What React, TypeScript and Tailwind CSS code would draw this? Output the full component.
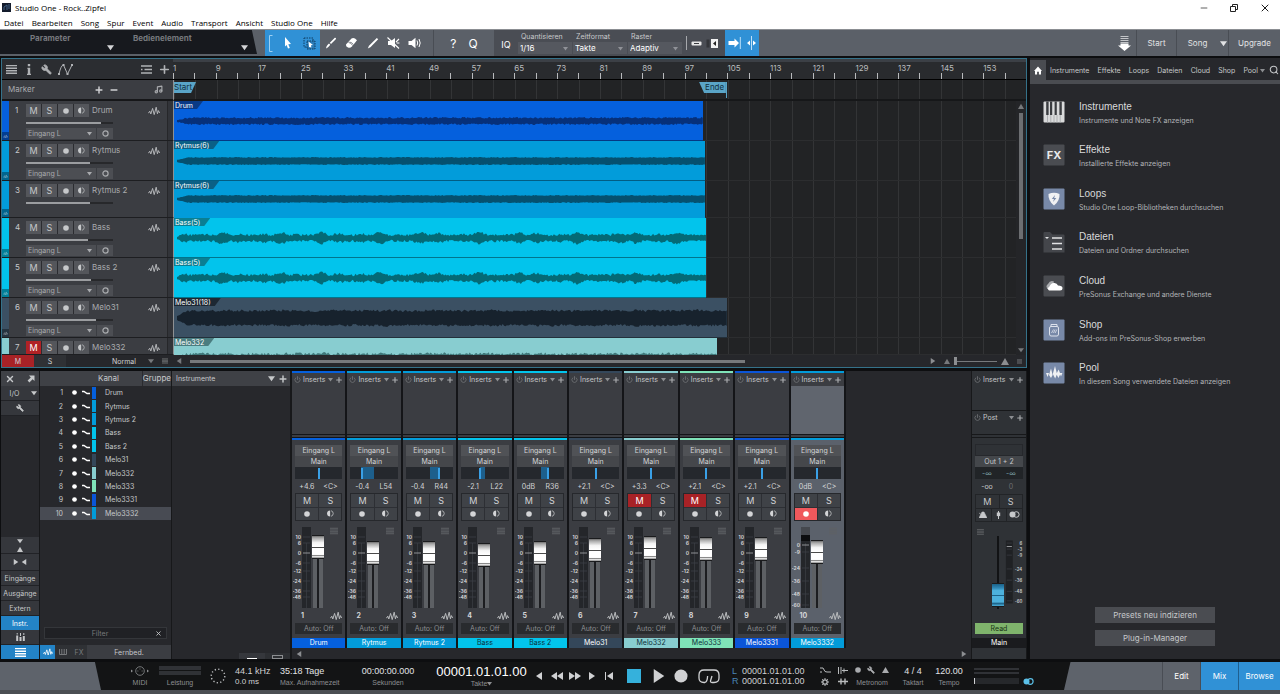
import React from 'react';
import { Minus, Music, Plus, Power, Search, Wrench, X } from 'lucide-react';

interface Track {
  id: number;
  name: string;
  clip: string;
  color: string;
  tag: string;
  wave: string;
  amp: number;
  noise: number;
  swell: number;
  endBar: number;
  volume: number;
  rowClass: string;
  hasInput: boolean;
  muted?: boolean;
}

interface Channel {
  id: number;
  name: string;
  color: string;
  darkText?: boolean;
  gain: string;
  panLabel: string;
  pan: number;
  fader: number;
  muted?: boolean;
  armed?: boolean;
}

const TOTAL_BARS = 160;
const FADER_TRAVEL = 49;

const tracks: Track[] = [
  { id: 1, name: 'Drum', clip: 'Drum', color: '#0560dd', tag: '#0a3a86', wave: '#06307a', amp: 4, noise: 0.4, swell: 0, endBar: 99.3, volume: 86, rowClass: 'h-10', hasInput: true },
  { id: 2, name: 'Rytmus', clip: 'Rytmus(6)', color: '#029cda', tag: '#0b6086', wave: '#05506f', amp: 4, noise: 0.2, swell: 0, endBar: 99.7, volume: 74, rowClass: 'h-10', hasInput: true },
  { id: 3, name: 'Rytmus 2', clip: 'Rytmus(6)', color: '#029cda', tag: '#0b6086', wave: '#05506f', amp: 4, noise: 0.2, swell: 0, endBar: 99.7, volume: 74, rowClass: 'h-[37px]', hasInput: false },
  { id: 4, name: 'Bass', clip: 'Bass(5)', color: '#02c4ec', tag: '#0a7f93', wave: '#046a76', amp: 7, noise: 0.35, swell: 0.4, endBar: 99.9, volume: 71, rowClass: 'h-10', hasInput: true },
  { id: 5, name: 'Bass 2', clip: 'Bass(5)', color: '#02c4ec', tag: '#0a7f93', wave: '#046a76', amp: 7, noise: 0.35, swell: 0.4, endBar: 99.9, volume: 75, rowClass: 'h-10', hasInput: true },
  { id: 6, name: 'Melo31', clip: 'Melo31(18)', color: '#3b5063', tag: '#1d2833', wave: '#17222d', amp: 9, noise: 0.25, swell: 0.08, endBar: 103.8, volume: 81, rowClass: 'h-10', hasInput: true },
  { id: 7, name: 'Melo332', clip: 'Melo332', color: '#88cdd0', tag: '#4a7d80', wave: '#3f7779', amp: 6, noise: 0.45, swell: 0.1, endBar: 101.9, volume: 80, rowClass: 'h-[17px]', hasInput: true, muted: true },
];

const channels: Channel[] = [
  { id: 1, name: 'Drum', color: '#0560dd', gain: '+4.6', panLabel: '<C>', pan: 0, fader: 49 },
  { id: 2, name: 'Rytmus', color: '#029cda', gain: '-0.4', panLabel: 'L54', pan: -54, fader: 43 },
  { id: 3, name: 'Rytmus 2', color: '#029cda', gain: '-0.4', panLabel: 'R44', pan: 44, fader: 43 },
  { id: 4, name: 'Bass', color: '#02c4ec', darkText: true, gain: '-2.1', panLabel: 'L22', pan: -22, fader: 41 },
  { id: 5, name: 'Bass 2', color: '#02c4ec', darkText: true, gain: '0dB', panLabel: 'R36', pan: 36, fader: 43 },
  { id: 6, name: 'Melo31', color: '#34475a', gain: '+2.1', panLabel: '<C>', pan: 0, fader: 46 },
  { id: 7, name: 'Melo332', color: '#88cdd0', darkText: true, gain: '+3.3', panLabel: '<C>', pan: 0, fader: 48, muted: true },
  { id: 8, name: 'Melo333', color: '#7fe3b8', darkText: true, gain: '+2.1', panLabel: '<C>', pan: 0, fader: 47, muted: true },
  { id: 9, name: 'Melo3331', color: '#0b55d8', gain: '+2.1', panLabel: '<C>', pan: 0, fader: 47 },
  { id: 10, name: 'Melo3332', color: '#029cda', gain: '0dB', panLabel: '<C>', pan: 0, fader: 44, armed: true },
];

const menus = ['Datei', 'Bearbeiten', 'Song', 'Spur', 'Event', 'Audio', 'Transport', 'Ansicht', 'Studio One', 'Hilfe'];

const browserItems = [
  { title: 'Instrumente', text: 'Instrumente und Note FX anzeigen' },
  { title: 'Effekte', text: 'Installierte Effekte anzeigen' },
  { title: 'Loops', text: 'Studio One Loop-Bibliotheken durchsuchen' },
  { title: 'Dateien', text: 'Dateien und Ordner durchsuchen' },
  { title: 'Cloud', text: 'PreSonus Exchange und andere Dienste' },
  { title: 'Shop', text: 'Add-ons im PreSonus-Shop erwerben' },
  { title: 'Pool', text: 'In diesem Song verwendete Dateien anzeigen' },
];

/* ---------- small icons ---------- */

type Dir = 'up' | 'down' | 'left' | 'right';

const triPaths: Record<Dir, string> = {
  up: 'M0 8L4 1L8 8Z',
  down: 'M0 1.5L8 1.5L4 7Z',
  left: 'M7 0L7 8L1 4Z',
  right: 'M1 0L1 8L7 4Z',
};

const Tri: React.FC<{ dir?: Dir; size?: number; className?: string }> = ({ dir = 'down', size = 6, className }) => (
  <svg width={size} height={size} viewBox="0 0 8 8" className={className} aria-hidden="true">
    <path d={triPaths[dir]} fill="currentColor" />
  </svg>
);

const WaveIcon: React.FC<{ size?: number; className?: string }> = ({ size = 12, className }) => (
  <svg width={size} height={size} viewBox="0 0 12 12" className={className} aria-hidden="true">
    <path d="M0.4 8.2L1.8 6.2L2.8 9L4.6 3.4L6.2 9.6L8.2 2.2L9.4 8.8L10.4 5.6L11.6 8" fill="none" stroke="currentColor" strokeWidth="1" />
  </svg>
);

const Dot: React.FC<{ size?: number }> = ({ size = 6 }) => (
  <svg width={size} height={size} viewBox="0 0 6 6" aria-hidden="true">
    <circle cx="3" cy="3" r="2.8" fill="currentColor" />
  </svg>
);

const HalfDot: React.FC = () => (
  <svg width="7" height="7" viewBox="0 0 8 8" aria-hidden="true">
    <path d="M3.6 0.5A3.5 3.5 0 0 0 3.6 7.5Z" fill="currentColor" />
    <path d="M4.6 0.8A3.3 3.3 0 0 1 4.6 7.2" fill="none" stroke="currentColor" strokeWidth="0.8" />
  </svg>
);

const Lines: React.FC<{ size?: number; className?: string }> = ({ size = 10, className }) => (
  <svg width={size} height={size} viewBox="0 0 10 10" className={className} aria-hidden="true">
    <path d="M0 1.5H10M0 3.8H10M0 6.1H10M0 8.4H10" stroke="currentColor" strokeWidth="1.3" />
  </svg>
);

/* ---------- title bar, menu, toolbar ---------- */

const TitleBar: React.FC = () => (
  <header className="bg-white font-['Open_Sans','Noto_Sans',sans-serif] text-black">
    <div className="flex h-[15px] items-center gap-1 pl-0.5">
      <svg width="9" height="9" viewBox="0 0 9 9" aria-hidden="true">
        <rect width="9" height="9" fill="#141c2c" />
        <path d="M2 7V4L5 2V7M7 1V6" stroke="#3e5f84" fill="none" />
      </svg>
      <h1 className="text-[8px]">Studio One - Rock..Zipfel</h1>
      <div className="ml-auto flex items-center">
        <button aria-label="Minimieren" className="flex w-[30px] justify-center"><Minus size={10} strokeWidth={1.5} /></button>
        <button aria-label="Wiederherstellen" className="flex w-[30px] justify-center">
          <svg width="8" height="8" viewBox="0 0 8 8"><path d="M0.5 2.5H5.5V7.5H0.5ZM2.5 2.5V0.5H7.5V5.5H5.5" fill="none" stroke="#222" /></svg>
        </button>
        <button aria-label="Schließen" className="flex w-[31px] justify-center"><X size={12} strokeWidth={1.8} /></button>
      </div>
    </div>
    <nav className="flex h-3.5 items-center gap-2 pl-1 text-[8px]">
      {menus.map((m) => <button key={m}>{m}</button>)}
    </nav>
  </header>
);

const ToolSelect: React.FC<{ id: string; label: string; value: string }> = ({ id, label, value }) => (
  <div className="flex w-[54px] flex-col justify-center gap-px">
    <label htmlFor={id} className="px-[3px] text-[7px] text-[#c9cacc]">{label}</label>
    <div className="flex h-3 items-center bg-[#55585f] pr-1">
      <select id={id} className="min-w-0 flex-1 appearance-none pl-0.5 text-[8px] text-white">
        <option>{value}</option>
      </select>
      <Tri size={5} className="text-[#909298]" />
    </div>
  </div>
);

const toolBtn = 'flex w-[21px] items-center justify-center';

const Toolbar: React.FC = () => (
  <div className="flex h-[27px] border-t border-[#8b8e92] bg-[#5b6068] text-[8px] text-[#e2e3e5]">
    <div className="flex h-6 w-[257px] bg-[#17191e] pt-1 text-[8px] font-bold text-[#76787d] [clip-path:polygon(0_0,98%_0,100%_100%,0_100%)]">
      <div className="flex w-[116px] justify-between pl-[30px]">
        <span>Parameter</span>
        <Tri size={7} className="mt-[10px] mr-0.5 text-[#d4d5d7]" />
      </div>
      <div className="flex flex-1 justify-between pl-[17px]">
        <span>Bedienelement</span>
        <Tri size={7} className="mt-[10px] mr-[9px] text-[#d4d5d7]" />
      </div>
    </div>
    <div className="ml-2 flex bg-[#3091d6] text-white">
      <span className="flex w-3 items-center justify-center">
        <svg width="4" height="17" viewBox="0 0 4 17"><path d="M3.5 0.5H0.5V16.5H3.5" fill="none" stroke="#9fd0f2" /></svg>
      </span>
      <button aria-label="Pfeil" className={toolBtn}>
        <svg width="12" height="14" viewBox="0 0 12 14"><path d="M3 1L9 8L6.3 8.2L7.8 12L6 12.6L4.6 9L3 10.5Z" fill="white" /></svg>
      </button>
      <button aria-label="Bereich" className="flex w-[22px] items-center justify-center">
        <svg width="13" height="13" viewBox="0 0 13 13"><rect x="1" y="1" width="9" height="9" fill="none" stroke="#0d3d63" strokeDasharray="1.5 1" /><rect x="4" y="4" width="8" height="8" fill="#2a7ab5" stroke="#0d3d63" strokeDasharray="1.5 1" /><path d="M5.5 4.5L10 8L8 8.3L8.4 10.4L6 10Z" fill="white" /></svg>
      </button>
    </div>
    <div className="flex w-[114px] border-r border-[#494d54] text-white">
      <button aria-label="Messer" className={toolBtn}>
        <svg width="12" height="12" viewBox="0 0 12 12"><path d="M1 11.5C1.5 8.5 3 7.4 4 6.6L5.2 7.8C4.4 9.2 3 10.6 1 11.5ZM4.8 5.8L9.8 0.8Q11.2 0.6 11 2L6 7Z" fill="currentColor" /></svg>
      </button>
      <button aria-label="Radierer" className={toolBtn}>
        <svg width="13" height="12" viewBox="0 0 13 12"><path d="M1 7.5L6.5 1.5Q8 0.5 10 1.5L12 3.2L7 9.5Q5 11.5 3 10.5L1.2 9.2Z" fill="currentColor" /><path d="M3.5 5.5Q6 5.5 7.6 8.6M4.5 5Q7.5 5.5 8.4 7.6" stroke="#5b6068" fill="none" strokeWidth="0.7" /></svg>
      </button>
      <button aria-label="Stift" className={toolBtn}>
        <svg width="12" height="12" viewBox="0 0 12 12"><path d="M0.8 11.4L2 8.8L9.8 1L11.2 2.2L3.4 10.2Z" fill="currentColor" /></svg>
      </button>
      <button aria-label="Stumm" className={toolBtn}>
        <svg width="13" height="12" viewBox="0 0 13 12"><path d="M1 4H4L8 1V11L4 8H1Z" fill="currentColor" /><path d="M0.5 0.5L12 11.5M12 2L9 5M12.4 6H9.6" stroke="currentColor" strokeWidth="1.1" /></svg>
      </button>
      <button aria-label="Hören" className={toolBtn}>
        <svg width="14" height="12" viewBox="0 0 14 12"><path d="M0.5 4H3.5L7.5 0.8V11.2L3.5 8H0.5Z" fill="currentColor" /><path d="M9 3.5Q10.4 6 9 8.5M11 2Q13.4 6 11 10" stroke="currentColor" fill="none" /></svg>
      </button>
    </div>
    <div className="flex w-[60px] items-center justify-center gap-3 text-[12px] text-white">
      <button>?</button>
      <button>Q</button>
    </div>
    <div className="flex bg-[#4a4d54]">
      <button className="w-6 pt-0.5 text-[9px] text-white">IQ</button>
      <div className="flex gap-px">
        <ToolSelect id="quant" label="Quantisieren" value="1/16" />
        <ToolSelect id="time" label="Zeitformat" value="Takte" />
        <ToolSelect id="raster" label="Raster" value="Adaptiv" />
      </div>
      <div className="flex w-[43px] items-center gap-1 pl-1">
        <span className="h-3.5 w-px bg-[#a6a8ac]" />
        <svg width="11" height="5" viewBox="0 0 11 5"><rect x="0.5" y="0.5" width="10" height="4" rx="1" fill="#e6e6e6" /><path d="M3 2.5H8" stroke="#3a3c40" /></svg>
        <svg width="12" height="9" viewBox="0 0 12 9"><rect x="0.5" y="0.5" width="3" height="8" fill="#333539" /><rect x="5" y="0" width="7" height="9" fill="#f2f2f2" /><path d="M10 2L7 4.5L10 7Z" fill="#222" /></svg>
      </div>
    </div>
    <div className="flex items-center gap-1.5 bg-[#3091d6] px-[3px] text-white">
      <svg width="13" height="12" viewBox="0 0 13 12"><path d="M0.5 4H6.5V1.5L11 6L6.5 10.5V8H0.5Z" fill="currentColor" /><path d="M12.3 0V12" stroke="#bfe0f7" /></svg>
      <svg width="9" height="14" viewBox="0 0 9 14"><path d="M4.5 0V14" stroke="#bfe0f7" /><path d="M3 4.5V9.5L0 7ZM6 4.5V9.5L9 7Z" fill="currentColor" /></svg>
    </div>
    <div className="ml-auto flex">
      <button aria-label="Installieren" className="flex w-6 items-center justify-center border-r border-[#494d54]">
        <svg width="13" height="16" viewBox="0 0 13 16"><path d="M2.5 1.5H10.5M2.5 3.5H10.5M2.5 5.5H10.5M2.5 7.5H10.5" stroke="#c3c5c8" /><path d="M2.5 8.5H10.5V10.5H13L6.5 16L0 10.5H2.5Z" fill="white" /></svg>
      </button>
      <button className="w-10 border-r border-[#494d54]">Start</button>
      <button className="w-[41px]">Song</button>
      <button aria-label="Songliste" className="flex w-[11px] items-center justify-center border-r border-[#494d54]"><Tri size={7} /></button>
      <button className="w-[51px]">Upgrade</button>
    </div>
  </div>
);

/* ---------- arranger ---------- */

const rand = (i: number, seed: number) => Math.abs(Math.sin(i * 12.9898 + seed * 78.233) * 43758.5453) % 1;

// Deterministic waveform outline around the centre line, y = 12
const wavePath = (amp: number, noise: number, swell: number, seed: number) => {
  const n = 400;
  const top: string[] = [];
  const bottom: string[] = [];
  for (let i = 0; i <= n; i++) {
    const x = (i * 520) / n;
    const slow = Math.pow(Math.abs(Math.sin(i * 0.21 + seed) * Math.cos(i * 0.083)), 2);
    const body = 1 - noise - swell + swell * slow;
    const fade = Math.min(1, 0.3 + i / 12);
    const up = amp * fade * (body + noise * rand(i, seed));
    const down = amp * fade * (body + noise * rand(i + 900, seed));
    top.push(`${x.toFixed(1)} ${(12 - up).toFixed(1)}`);
    bottom.unshift(`${x.toFixed(1)} ${(12 + down).toFixed(1)}`);
  }
  return `M${top.join('L')}L${bottom.join('L')}Z`;
};

const GridLines: React.FC = () => (
  <div className="absolute inset-0 grid grid-cols-40" aria-hidden="true">
    {Array.from({ length: 40 }, (_, i) => <span key={i} className="border-l border-[#333436]" />)}
  </div>
);

const msrBtn = 'flex w-[15px] items-center justify-center bg-[#54565b]';

const TrackRow: React.FC<{ track: Track }> = ({ track }) => (
  <div className={`flex overflow-hidden ${track.rowClass}`}>
    <div className="flex w-[171px] shrink-0 border-b border-[#1d1e21] bg-[#3b3d42] text-[8px] text-[#a9abae]">
      <div className="flex w-[7px] flex-col justify-end" style={{ backgroundColor: track.color }}>
        {track.id < 7 && <span className="flex h-2 items-center justify-center bg-black/35"><WaveIcon size={5} className="text-white/50" /></span>}
      </div>
      <span className="w-[17px] pt-[5px] pl-1.5 text-[8px] text-[#c6c8ca]">{track.id}</span>
      <div className="flex w-[137px] flex-col pt-[3px]">
        <div className="flex h-[13px] items-center">
          <div className="flex h-[13px] gap-px bg-[#2b2c30] text-[9px] text-[#c6c8ca]">
            <button className={`flex w-[15px] items-center justify-center ${track.muted ? 'bg-[#b02225] text-white' : 'bg-[#54565b]'}`}>M</button>
            <button className={msrBtn}>S</button>
            <button aria-label="Aufnahme" className={msrBtn}><Dot /></button>
            <button aria-label="Monitor" className={msrBtn}><HalfDot /></button>
          </div>
          <span className="flex-1 pl-[3px]">{track.name}</span>
          <WaveIcon size={12} className="mr-[3px] text-[#b3b5b8]" />
        </div>
        <input
          type="range"
          aria-label={`Lautstärke ${track.name}`}
          defaultValue={track.volume}
          className="mt-[5px] h-0.5 w-[87px] shrink-0 appearance-none [&::-webkit-slider-thumb]:h-0.5 [&::-webkit-slider-thumb]:w-px [&::-webkit-slider-thumb]:appearance-none"
          style={{ background: `linear-gradient(to right, #9b9da0 ${track.volume}%, #27282b ${track.volume}%)` }}
        />
        {track.hasInput && (
          <div className="mt-1 flex h-[11px] shrink-0 gap-px">
            <div className="flex w-[70px] items-center bg-[#4c4e53] pr-1">
              <select aria-label={`Eingang ${track.name}`} className="min-w-0 flex-1 appearance-none pl-0.5 text-[7px] text-[#a9abae]">
                <option>Eingang L</option>
              </select>
              <Tri size={5} />
            </div>
            <button aria-label="Stereo" className="flex w-4 items-center justify-center bg-[#4c4e53]">
              <svg width="7" height="7" viewBox="0 0 7 7"><circle cx="3.5" cy="3.5" r="2.6" fill="none" stroke="currentColor" strokeWidth="1.2" /></svg>
            </button>
          </div>
        )}
      </div>
      <span className="ml-auto w-1.5 border-l border-[#26272a] bg-[#323439]" />
    </div>
    <div className="relative flex-1 border-b border-l border-b-[#2c2d2f] border-l-[#8e9092] bg-[#222325]">
      <GridLines />
      <div
        className="relative flex h-10 flex-col border-b border-black/40"
        style={{ width: `${(track.endBar / TOTAL_BARS) * 100}%`, backgroundColor: track.color }}
      >
        <span
          className="flex h-2 items-center self-start pr-2.5 pl-px text-[7px] text-white [clip-path:polygon(0_0,100%_0,calc(100%-6px)_100%,0_100%)]"
          style={{ backgroundColor: track.tag }}
        >
          {track.clip}
        </span>
        <svg viewBox="0 0 520 24" preserveAspectRatio="none" className={`ml-[3px] h-6 ${track.hasInput ? '' : '-mt-0.5'}`} aria-hidden="true">
          <path d={wavePath(track.amp, track.noise, track.swell, track.clip.length)} fill={track.wave} />
        </svg>
      </div>
    </div>
  </div>
);

const Ruler: React.FC = () => (
  <div className="grid flex-1 grid-cols-20 border-t-[3px] border-b border-t-[#3c4046] border-b-black bg-[#292b2e]">
    {Array.from({ length: 20 }, (_, i) => (
      <div key={i} className="flex flex-col justify-between">
        <span className="pt-0.5 text-[8px] leading-[9px] text-[#b9bbbd]">{i * 8 + 1}</span>
        <span className="grid h-1.5 grid-cols-2">
          <i className="border-l border-[#b9bbbd]" />
          <i className="border-l border-[#b9bbbd]" />
        </span>
      </div>
    ))}
  </div>
);

const Arranger: React.FC = () => (
  <section className="flex flex-col border border-[#35728a] bg-[#26272b]">
    <div className="flex h-[21px]">
      <div className="flex w-[171px] shrink-0 items-center gap-2.5 border-b border-black bg-[#2b2d31] pl-1 text-[#b0b2b5]">
        <Lines size={11} />
        <svg width="4" height="11" viewBox="0 0 4 11"><path d="M0.8 0H3.2V2.2H0.8ZM0.4 3.8H3.2V9.8H4V11H0V9.8H0.8V5H0.4Z" fill="currentColor" /></svg>
        <Wrench size={11} className="-scale-x-100" fill="currentColor" />
        <svg width="16" height="13" viewBox="0 0 16 13" className="-ml-1"><path d="M1 11Q3 2 5.5 2L9.5 11L14 2" stroke="currentColor" fill="none" /><path d="M0 10H2V12H0ZM4.5 1H6.5V3H4.5ZM8.5 10H10.5V12H8.5ZM13 1H15V3H13Z" fill="currentColor" /></svg>
        <svg width="11" height="9" viewBox="0 0 11 9" className="ml-auto"><path d="M0 1H11M3.5 4.5H11M0 4.5H1.5M0 8H11" stroke="currentColor" strokeWidth="1.5" /></svg>
        <Plus size={13} strokeWidth={3} className="-ml-1 mr-0.5" />
      </div>
      <Ruler />
    </div>
    <div className="flex h-[21px]">
      <div className="flex w-[171px] shrink-0 items-center border-b-2 border-[#161719] bg-[#3b3d42] pl-1.5 text-[8px] text-[#a9abae]">
        <span className="w-[86px]">Marker</span>
        <Plus size={10} strokeWidth={3.5} className="text-[#d0d1d3]" />
        <Minus size={10} strokeWidth={3.5} className="ml-[5px] text-[#d0d1d3]" />
        <Music size={9} strokeWidth={3} className="mr-2.5 ml-auto" />
      </div>
      <div className="relative flex-1 border-b-2 border-l border-b-[#161719] border-l-[#8e9092] bg-[#222325]">
        <GridLines />
        <span className="absolute top-0.5 left-0 h-[11px] bg-[#5aa5c8] pr-1 text-[8px] leading-[11px] text-[#123142] [clip-path:polygon(0_0,100%_0,calc(100%-5px)_100%,0_100%)]">Start</span>
        <span
          className="absolute top-0.5 h-[11px] -translate-x-full bg-[#5aa5c8] pr-0.5 pl-1.5 text-[8px] leading-[11px] text-[#123142] [clip-path:polygon(0_0,100%_0,100%_100%,5px_100%)]"
          style={{ left: `${(103.7 / TOTAL_BARS) * 100}%` }}
        >
          Ende
        </span>
        <i className="absolute top-0.5 h-4 w-px bg-[#5aa5c8]" style={{ left: `${(103.7 / TOTAL_BARS) * 100}%` }} />
      </div>
    </div>
    <div className="relative">
      {tracks.map((t) => <TrackRow key={t.id} track={t} />)}
      <div className="absolute inset-y-0 right-0 flex w-2.5 flex-col items-center bg-[#242528] py-0.5 text-[#77797c]">
        <Tri dir="up" size={6} />
        <span className="mt-1 h-[126px] w-1 bg-[#6c6e71]" />
        <Tri size={6} className="mt-auto" />
      </div>
    </div>
    <div className="flex h-3 items-center text-[7px] text-[#d0d1d3]">
      <button className="h-full w-8 bg-[#a82226]">M</button>
      <button className="h-full w-8 bg-[#2f3135]">S</button>
      <select aria-label="Spurhöhe" className="ml-[46px] w-9 appearance-none">
        <option>Normal</option>
      </select>
      <Tri size={6} className="text-[#77797c]" />
      <Lines size={6} className="ml-2 text-[#77797c]" />
      <Tri dir="left" size={6} className="ml-2 text-[#77797c]" />
      <div className="ml-2 flex flex-1 text-[#77797c]">
        <span className="h-[3px] w-3/4 bg-[#77797c]" />
      </div>
      <Tri dir="right" size={6} className="text-[#8c8e91]" />
      <Tri dir="up" size={6} className="ml-2 text-[#77797c]" />
      <input
        type="range"
        aria-label="Zoom"
        defaultValue={0}
        className="mx-1 h-2 w-[43px] appearance-none bg-[linear-gradient(#77797c,#77797c)] bg-[length:100%_1px] bg-center bg-no-repeat [&::-webkit-slider-thumb]:h-2 [&::-webkit-slider-thumb]:w-[3px] [&::-webkit-slider-thumb]:appearance-none [&::-webkit-slider-thumb]:bg-[#8c8e91]"
      />
      <Tri dir="up" size={8} className="text-[#8c8e91]" />
      <Lines size={5} className="mr-1 ml-2 text-[#77797c]" />
    </div>
  </section>
);

/* ---------- mixer ---------- */

const sideBtn = 'flex items-center justify-center border-b border-[#212226] bg-[#35373c]';

const MixerSide: React.FC = () => (
  <div className="flex w-[38px] flex-col text-[7px] text-[#c6c8ca]">
    <div className="flex h-[15px] items-center justify-between bg-[#3f4146] px-1">
      <X size={10} strokeWidth={3.5} />
      <svg width="8" height="8" viewBox="0 0 8 8"><path d="M2 0.5H7.5V6L5.6 4.2L2.4 7.4L0.6 5.6L3.8 2.4Z" fill="currentColor" /></svg>
    </div>
    <div className="flex h-[15px]">
      <button className={`${sideBtn} flex-1`}>I/O</button>
      <button aria-label="I/O Liste" className={`${sideBtn} w-[11px]`}><Tri size={6} /></button>
    </div>
    <button aria-label="Optionen" className={`${sideBtn} h-[15px]`}><Wrench size={8} fill="currentColor" className="-scale-x-100" /></button>
    <button aria-label="Höhe" className={`${sideBtn} mt-auto h-[17px] flex-col gap-0.5`}><Tri size={6} /><Tri dir="up" size={6} /></button>
    <button aria-label="Breite" className={`${sideBtn} h-[17px] gap-0.5`}><Tri dir="right" size={6} /><Tri dir="left" size={6} /></button>
    <button className={`${sideBtn} h-[15px]`}>Eingänge</button>
    <button className={`${sideBtn} h-[15px]`}>Ausgänge</button>
    <button className={`${sideBtn} h-[15px]`}>Extern</button>
    <button className="h-[14px] bg-[#2383c6] text-white">Instr.</button>
    <button aria-label="Kanäle" className={`${sideBtn} h-[15px]`}>
      <svg width="9" height="8" viewBox="0 0 9 8"><path d="M1.2 0V1.5M4.5 0V3M7.8 0V2" stroke="currentColor" /><path d="M1.2 2.5V8M4.5 4V8M7.8 3V8" stroke="currentColor" strokeWidth="2" /></svg>
    </button>
    <button aria-label="Liste" className="flex h-[14px] items-center justify-center bg-[#2383c6] text-white"><Lines size={11} /></button>
  </div>
);

const ChannelList: React.FC = () => (
  <div className="flex w-[133px] flex-col border-x border-[#17181a] text-[7px] text-[#c6c8ca]">
    <table className="w-full border-collapse">
      <thead>
        <tr className="h-[15px] bg-[#3f4146] text-[8px]">
          <th className="w-[26px]" />
          <th className="w-[24px]" />
          <th className="w-1" />
          <th className="pl-1 text-left font-normal">Kanal</th>
          <th className="w-7 border-l border-[#2a2b2f] text-right font-normal">Gruppe</th>
        </tr>
      </thead>
    </table>
    <table className="h-[134px] w-full border-collapse">
      <tbody>
        {channels.map((c) => (
          <tr key={c.id} className={c.armed ? 'bg-[#484b53]' : ''}>
            <td className="w-[23px] p-0 text-right">{c.id}</td>
            <td className="w-[29px] p-0">
              <span className="flex items-center justify-end gap-[5px] pr-0.5 text-white">
                <Dot size={5} />
                <svg width="8" height="5" viewBox="0 0 8 5"><path d="M0 1.5H2L5 3.5H8" stroke="currentColor" strokeWidth="1.4" fill="none" /></svg>
              </span>
            </td>
            <td className="w-1 p-0"><span className="block h-3 w-1" style={{ backgroundColor: c.color }} /></td>
            <td className="p-0 pl-[9px]">{c.name}</td>
          </tr>
        ))}
      </tbody>
    </table>
    <div className="mx-1 mt-auto mb-1.5 flex h-3 items-center border border-[#34363a] bg-[#202125] pr-1">
      <input aria-label="Filter" placeholder="Filter" className="min-w-0 flex-1 text-center placeholder:text-[#77797c]" />
      <X size={7} strokeWidth={3} />
    </div>
    <div className="flex h-[14px] items-stretch bg-[#2f3135]">
      <button aria-label="Audio" className="flex w-[15px] items-center justify-center bg-[#2383c6] text-white"><WaveIcon size={10} /></button>
      <button aria-label="Instrument" className="flex w-4 items-center justify-center text-[#77797c]">
        <svg width="8" height="6" viewBox="0 0 8 6"><path d="M0.5 0V5.5H7.5V0M2.8 0V5M5.2 0V5" stroke="currentColor" fill="none" /></svg>
      </button>
      <button className="w-4 text-[#77797c]">FX</button>
      <button className="flex-1 bg-[#3b3d42]">Fernbed.</button>
    </div>
  </div>
);

const InsertHeader: React.FC<{ label: string }> = ({ label }) => (
  <div className="flex h-[13px] items-center gap-0.5 px-0.5 text-[7px] text-[#c6c8ca]">
    <Power size={7} strokeWidth={2.5} className="text-[#77797c]" />
    <span className="flex-1">{label}</span>
    <Tri size={5} className="text-[#8c8e91]" />
    <Plus size={8} strokeWidth={3.5} className="text-[#a9abae]" />
  </div>
);

const normalScale: [string, number][] = [['10', 10], ['6', 16], ['0', 26], ['-6', 36], ['-12', 44], ['-24', 54], ['-36', 64], ['-48', 70]];
const armedScale: [string, number][] = [['0', 18], ['-9', 25], ['-24', 41], ['-36', 54], ['-48', 67], ['-60', 78]];

const MeterScale: React.FC<{ armed?: boolean }> = ({ armed }) => (
  <svg width="18" height="81" viewBox="0 0 18 81" aria-hidden="true">
    <rect x="9" y="0" width="9" height="81" fill="#24262a" />
    {armed && <rect x="9" y="0" width="9" height="8" fill="#45484e" />}
    {armed && <rect x="9" y="8" width="9" height="6" fill="#0c0d0f" />}
    <path d="M13.5 16V81" stroke="#34373c" />
    {(armed ? armedScale : normalScale).map(([text, y]) => (
      <g key={text}>
        <text x="8" y={y + 2} textAnchor="end" fontSize="5" fontWeight="600" fill="#dadbdd">{text}</text>
        <path d={`M10 ${y}H17`} stroke={text === '0' ? '#a9abae' : '#3d4046'} strokeWidth="0.8" />
      </g>
    ))}
  </svg>
);

const faderBase =
  'appearance-none [writing-mode:vertical-lr] [direction:rtl] h-[73px] w-3 bg-no-repeat bg-bottom [&::-webkit-slider-thumb]:h-6 [&::-webkit-slider-thumb]:w-3 [&::-webkit-slider-thumb]:appearance-none [&::-webkit-slider-thumb]:border-x [&::-webkit-slider-thumb]:border-[#1a1b1d]';
const faderWhite =
  'bg-[length:100%_52px] bg-[linear-gradient(90deg,transparent_1px,#5d6064_1px,#5d6064_5px,#1c1d20_5px,#1c1d20_7px,#5d6064_7px,#5d6064_11px,transparent_11px)] [&::-webkit-slider-thumb]:bg-[linear-gradient(#6e6e6e,#a6a6a6_8%,#f4f4f4_30%,#ffffff_48%,#4a4a4a_50%,#4a4a4a_53%,#ffffff_54%,#ffffff_84%,#777777_88%,#f0f0f0_92%,#8a8a8a)]';
const faderBlue =
  'bg-[linear-gradient(90deg,transparent_5px,#121315_5px,#121315_7px,transparent_7px)] [&::-webkit-slider-thumb]:bg-[linear-gradient(#1c6288,#2f87b5_18%,#4db1dc_30%,#4db1dc_48%,#1c6288_50%,#1c6288_54%,#4db1dc_56%,#4db1dc_82%,#1c6288_88%,#4db1dc)]';

const ChannelStrip: React.FC<{ channel: Channel }> = ({ channel: c }) => {
  const edge = 50 + c.pan / 2;
  const from = Math.min(edge, 50);
  const to = Math.max(edge, 50);
  return (
    <article className="flex flex-col border-r-2 border-[#141518] text-[7px] text-[#d4d5d7]">
      <span className="h-0.5" style={{ backgroundColor: c.color }} />
      <div className="bg-[#3b3d42]"><InsertHeader label="Inserts" /></div>
      <div className={`h-12 ${c.armed ? 'bg-[#60656e]' : 'bg-[#3b3d42]'}`} />
      <div className="h-1 border-y border-[#141518] bg-[#3b3d42]" />
      <span className="h-0.5" style={{ backgroundColor: c.color }} />
      <div className={`flex flex-col px-[3px] pt-[5px] pb-1 ${c.armed ? 'bg-[#5b616b]' : 'bg-[#3b3d42]'}`}>
        <button className="h-[11px] bg-[#505256]">Eingang L</button>
        <button className="h-[11px] bg-[#45474b]">Main</button>
        <input
          type="range"
          min={-100}
          max={100}
          defaultValue={c.pan}
          aria-label={`Panorama ${c.name}`}
          className="h-3 w-full appearance-none [&::-webkit-slider-thumb]:h-[11px] [&::-webkit-slider-thumb]:w-0.5 [&::-webkit-slider-thumb]:appearance-none [&::-webkit-slider-thumb]:bg-[#3aa0e6]"
          style={{ background: `linear-gradient(to right, #25282d ${from}%, #1d5f8c ${from}%, #1d5f8c ${to}%, #25282d ${to}%)` }}
        />
        <div className="grid h-[14px] grid-cols-2 items-center text-center">
          <span>{c.gain}</span>
          <span>{c.panLabel}</span>
        </div>
        <div className="grid h-7 grid-cols-2 grid-rows-2 gap-px border border-[#26282c] bg-[#2d2f34] text-[9px]">
          <button className={c.muted ? 'bg-[#a82226] text-white' : 'bg-[#3f4247]'}>M</button>
          <button className="bg-[#3f4247]">S</button>
          <button aria-label="Aufnahme" className={`flex items-center justify-center ${c.armed ? 'bg-[#f0585c] text-white' : 'bg-[#3f4247]'}`}><Dot /></button>
          <button aria-label="Monitor" className="flex items-center justify-center bg-[#3f4247]"><HalfDot /></button>
        </div>
        <div className="-ml-0.5 mt-1.5 flex h-[81px]">
          <MeterScale armed={c.armed} />
          <input
            type="range"
            min={0}
            max={FADER_TRAVEL}
            defaultValue={c.fader}
            aria-label={`Fader ${c.name}`}
            className={`ml-px self-end ${faderBase} ${faderWhite}`}
          />
          <Lines size={8} className="mr-1 ml-auto text-[#5f6165]" />
        </div>
        <div className="flex h-[15px] items-center justify-between pl-1.5">
          <b>{c.id}</b>
          <WaveIcon size={12} className="text-[#b9bbbd]" />
        </div>
        <button className="h-[11px] bg-[#292b2e] text-[#8c8e91]">Auto: Off</button>
      </div>
      <div className={`h-2.5 text-center text-[7px] leading-[10px] ${c.darkText ? 'text-[#0d2f3a]' : 'text-white'}`} style={{ backgroundColor: c.color }}>
        {c.name}
      </div>
    </article>
  );
};

const mainScale: [string, number][] = [['6', 11], ['-3', 18], ['-9', 25], ['-24', 41], ['-36', 54], ['-48', 67], ['-60', 78]];

const MainStrip: React.FC = () => (
  <article className="flex w-[56px] flex-col border-x border-[#17181a] bg-[#2f3236] text-[7px] text-[#c6c8ca]">
    <div className="h-[40px] border-b border-[#17181a] pt-0.5"><InsertHeader label="Inserts" /></div>
    <div className="h-6 border-b border-[#17181a]"><InsertHeader label="Post" /></div>
    <div className="mt-0.5 border-t border-[#17181a]" />
    <div className="flex flex-col px-[3px] pt-1.5">
      <span className="h-3 border border-[#26282c]" />
      <button className="h-[11px] bg-[#44474b]">Out 1 + 2</button>
      <div className="grid h-3 grid-cols-2 items-center bg-[#212427] text-center text-[#7ba0a4]"><span>-∞</span><span>-∞</span></div>
      <div className="grid h-[15px] grid-cols-2 items-center text-center"><span>-oo</span><span className="text-[#6c6e71]">0</span></div>
      <div className="grid h-7 grid-cols-6 grid-rows-2 gap-px border border-[#222427] bg-[#222427] text-[9px]">
        <button className="col-span-3 bg-[#303337]">M</button>
        <button className="col-span-3 bg-[#303337]">S</button>
        <button aria-label="Metronom" className="col-span-2 flex items-center justify-center bg-[#303337]">
          <svg width="8" height="7" viewBox="0 0 8 7"><path d="M0 7L3 1H5L8 7ZM0 2L3 4" fill="currentColor" stroke="currentColor" strokeWidth="0.6" /></svg>
        </button>
        <button aria-label="Pegel" className="col-span-2 flex items-center justify-center bg-[#303337]">
          <svg width="5" height="8" viewBox="0 0 5 8"><path d="M2.5 0V8" stroke="currentColor" /><rect x="0.8" y="1.5" width="3.4" height="3.6" fill="currentColor" /></svg>
        </button>
        <button aria-label="Mono" className="col-span-2 flex items-center justify-center bg-[#303337]">
          <svg width="11" height="7" viewBox="0 0 11 7"><circle cx="3.5" cy="3.5" r="3" fill="currentColor" /><circle cx="7.3" cy="3.5" r="2.8" fill="none" stroke="currentColor" /></svg>
        </button>
      </div>
      <div className="mt-1.5 flex h-[81px]">
        <Lines size={8} className="ml-0.5 text-[#5f6165]" />
        <input type="range" min={0} max={FADER_TRAVEL} defaultValue={2} aria-label="Fader Main" className={`ml-2 self-end ${faderBase} ${faderBlue}`} />
        <svg width="21" height="81" viewBox="0 0 21 81" className="ml-px" aria-hidden="true">
          <rect x="1" y="8" width="8" height="73" fill="#1f2124" />
          {mainScale.map(([text, y]) => (
            <g key={text}>
              <text x="20" y={y + 2} textAnchor="end" fontSize="5" fontWeight="600" fill="#c6c8ca">{text}</text>
              <path d={`M2 ${y}H8`} stroke="#3d4046" strokeWidth="0.8" />
            </g>
          ))}
          <path d="M2 15H8" stroke="#c6c8ca" strokeWidth="0.8" />
        </svg>
      </div>
      <button className="mt-[14px] h-[11px] bg-[#7fb46c] text-[#173312]">Read</button>
    </div>
    <div className="mt-1 h-2.5 bg-[#1a1b1e] text-center leading-[10px] text-white">Main</div>
  </article>
);

const Mixer: React.FC = () => (
  <section className="flex flex-1 bg-[#27282c]">
    <MixerSide />
    <ChannelList />
    <div className="flex w-[120px] flex-col border-r-2 border-[#17181a] text-[#c6c8ca]">
      <div className="flex h-[15px] items-center bg-[#3f4146] pr-0.5 pl-1 text-[7px]">
        <span className="flex-1">Instrumente</span>
        <Tri size={7} />
        <Plus size={10} strokeWidth={3.5} className="ml-[3px]" />
      </div>
      <div className="mt-auto flex justify-end">
        <button aria-label="Klein" className="flex h-1.5 w-[26px] items-end justify-center bg-[#35373c]"><i className="h-px w-2.5 bg-white" /></button>
        <button aria-label="Gross" className="flex h-1.5 w-[25px] items-end justify-center bg-[#2d2f33]"><i className="h-1 w-[11px] border border-[#8c8e91]" /></button>
      </div>
    </div>
    <div className="flex flex-1 flex-col justify-between">
      <div className="grid w-[554px] grid-cols-10">
        {channels.map((c) => <ChannelStrip key={c.id} channel={c} />)}
      </div>
      <div className="flex h-2.5 items-center justify-between px-1 text-[#8c8e91]">
        <Tri dir="left" size={6} />
        <Tri dir="right" size={6} />
      </div>
    </div>
    <MainStrip />
  </section>
);

/* ---------- browser ---------- */

const BrowserIcon: React.FC<{ kind: string }> = ({ kind }) => {
  const bg = kind === 'Loops' || kind === 'Shop' || kind === 'Pool' ? '#7889a8' : kind === 'Instrumente' ? '#d9dadb' : '#4a4c51';
  return (
    <svg width="22" height="22" viewBox="0 0 22 22" className="shrink-0" aria-hidden="true">
      {kind !== 'Dateien' && <rect x="0.5" y="0.5" width="21" height="21" rx="1" fill={bg} />}
      {kind === 'Instrumente' && (
        <g>
          <path d="M4.5 14V22M7.8 14V22M11 14V22M14 14V22M17.2 14V22" stroke="#9b9da0" strokeWidth="0.7" />
          <path d="M3.2 0.5H5.6V14H3.2ZM7 0.5H9.2V14H7ZM11.6 0.5H13.8V14H11.6ZM16.4 0.5H18.8V14H16.4Z" fill="#3a3c40" />
        </g>
      )}
      {kind === 'Effekte' && <text x="11" y="15" textAnchor="middle" fontSize="11" fontWeight="700" fill="#e9eaeb">FX</text>}
      {kind === 'Loops' && (
        <g>
          <path d="M5.5 6Q11 3.5 16.5 6Q17 13 11 17.5Q5 13 5.5 6Z" fill="#f0f1f3" />
          <path d="M12 7L8.8 11H11L10 14L13.4 10H11.2Z" fill="#7889a8" />
        </g>
      )}
      {kind === 'Dateien' && (
        <g>
          <path d="M0.5 2Q0.5 1 1.5 1H7L9.5 3.5H20.5Q21.5 3.5 21.5 4.5V21.5H0.5Z" fill="#44464b" />
          <path d="M2 6H6L4 8Z" fill="#e2e3e5" />
          <path d="M9 7H19M9 12.5H19M9 18H19" stroke="#e2e3e5" strokeWidth="1.6" />
        </g>
      )}
      {kind === 'Cloud' && (
        <g>
          <path d="M4 13Q2.5 11 5 9Q7 5 11 6.5L9 14H4Z" fill="#a9abae" />
          <path d="M6 15.5Q3.5 13.5 6.5 11.5Q8 7.5 11.5 8Q14 8 15 10.5Q19.5 10.5 19.5 13Q19.5 15.5 17 15.5Z" fill="#fff" />
        </g>
      )}
      {kind === 'Shop' && (
        <g fill="none" stroke="#dde2ec">
          <path d="M6.5 9Q6.5 7.5 8 7.5H14Q15.5 7.5 15.5 9V15Q15.5 17 14 17H8Q6.5 17 6.5 15ZM8 7.5V5.5H14V7.5" />
          <path d="M8.5 14L10.5 10.5M10.5 14L12 10.5M12.2 14L13.8 10.5" strokeWidth="0.8" />
        </g>
      )}
      {kind === 'Pool' && <path d="M3 11H6L4.6 15ZM6 13L8 6.5L9.6 13L8 16ZM9.8 12L12 4L14 12L12.2 16.5ZM13.4 12L15.6 7.5L17.4 12L15.4 16ZM16.6 11H19.4L18 14.5Z" fill="#f0f1f3" />}
    </svg>
  );
};

const Browser: React.FC = () => (
  <aside className="flex w-[250px] shrink-0 flex-col bg-[#27282c] text-[#c6c8ca]">
    <nav className="mt-0.5 flex h-6 items-center border-b-4 border-[#4a4c51] text-[7px]">
      <button aria-label="Start" className="flex h-full w-4 items-center justify-center bg-[#4a4c51] text-white">
        <svg width="8" height="9" viewBox="0 0 8 9"><path d="M4 0.5L8 5H7V8.5H4.9V5.8H3.1V8.5H1V5H0Z" fill="currentColor" /></svg>
      </button>
      <div className="flex flex-1 items-center justify-between pr-0.5 pl-1">
        {['Instrumente', 'Effekte', 'Loops', 'Dateien', 'Cloud', 'Shop', 'Pool'].map((t) => <button key={t}>{t}</button>)}
      </div>
      <Tri size={5} className="text-[#8c8e91]" />
      <Search size={10} strokeWidth={2.5} className="mr-px ml-1" />
    </nav>
    <ul className="mt-1.5 grid h-[305px] grid-rows-7">
      {browserItems.map((item) => (
        <li key={item.title} className="flex items-center gap-[14px] pl-[13px]">
          <BrowserIcon kind={item.title} />
          <a href="#" className="flex flex-col gap-[3px] pt-0.5">
            <span className="font-['Liberation_Sans',sans-serif] text-[10px] leading-3 text-[#d9dadb]">{item.title}</span>
            <span className="text-[7px] leading-[9px] text-[#b3b5b8]">{item.text}</span>
          </a>
        </li>
      ))}
    </ul>
    <div className="mt-auto mb-[13px] flex flex-col items-center gap-[7px] text-[8px]">
      <button className="h-4 w-[120px] bg-[#4a4c51]">Presets neu indizieren</button>
      <button className="h-4 w-[120px] bg-[#4a4c51]">Plug-in-Manager</button>
    </div>
  </aside>
);

/* ---------- transport ---------- */

const Readout: React.FC<{ value: string; label: string; className: string }> = ({ value, label, className }) => (
  <div className={`flex flex-col justify-center gap-px ${className}`}>
    <span className="text-[9px] leading-[11px] text-[#e2e3e5]">{value}</span>
    <span className="text-[7px] leading-[9px] text-[#8c8e91]">{label}</span>
  </div>
);

const Transport: React.FC = () => (
  <footer className="mt-[3px] flex h-8 border-b-4 border-[#4b4e53] bg-[#131415] font-['Liberation_Sans',sans-serif] text-[#d0d1d3]">
    <div className="w-[101px] bg-[#5e636b] [clip-path:polygon(0_0,94%_0,100%_100%,0_100%)]" />
    <div className="ml-5 flex w-[38px] flex-col items-center justify-center gap-0.5 text-[7px] text-[#8c8e91]">
      <svg width="18" height="10" viewBox="0 0 18 10"><circle cx="9" cy="5" r="4.3" fill="none" stroke="currentColor" strokeWidth="0.8" /><path d="M6.5 5H7.3M8.6 3H9.4M10.7 5H11.5" stroke="currentColor" /><path d="M0 3.5L2 5L0 6.5ZM16 3.5L18 5L16 6.5Z" fill="currentColor" /></svg>
      <span>MIDI</span>
    </div>
    <div className="flex w-[42px] flex-col items-center justify-center text-[7px] text-[#8c8e91]">
      <span className="h-1 w-full bg-[#303236]" />
      <span className="mt-px mb-[3px] h-1 w-full bg-[#303236]" />
      <span>Leistung</span>
    </div>
    <div className="flex w-[34px] items-center justify-center">
      <svg width="16" height="16" viewBox="0 0 16 16"><circle cx="8" cy="8" r="6.8" fill="none" stroke="#b9bbbd" strokeWidth="1.4" strokeDasharray="1.3 2.26" /></svg>
    </div>
    <div className="flex w-[45px] flex-col justify-center text-[9px] leading-[11px]">
      <span>44.1 kHz</span>
      <span className="text-[8px] leading-[10px]">0.0 ms</span>
    </div>
    <Readout value="35:18 Tage" label="Max. Aufnahmezeit" className="w-[75px]" />
    <Readout value="00:00:00.000" label="Sekunden" className="w-[78px] items-center pr-3" />
    <div className="flex w-[97px] flex-col items-center justify-center">
      <span className="text-[13px] leading-[14px] text-white">00001.01.01.00</span>
      <button className="flex items-center text-[7px] leading-[9px] text-[#8c8e91]">Takte<Tri size={5} /></button>
    </div>
    <div className="flex items-center">
      <button aria-label="Zurück" className="flex w-[18px] justify-center"><Tri dir="left" size={8} /></button>
      <button aria-label="Rücklauf" className="flex w-[18px] justify-center"><Tri dir="left" size={8} /><Tri dir="left" size={8} className="-ml-0.5" /></button>
      <button aria-label="Vorlauf" className="flex w-[18px] justify-center"><Tri dir="right" size={8} /><Tri dir="right" size={8} className="-ml-0.5" /></button>
      <button aria-label="Weiter" className="flex w-4 justify-center"><Tri dir="right" size={8} /></button>
      <button aria-label="Anfang" className="flex w-[18px] items-center justify-center"><i className="h-2 w-px bg-[#d0d1d3]" /><Tri dir="left" size={8} /></button>
      <button aria-label="Stopp" className="flex w-8 justify-center"><i className="size-3.5 bg-[#35b1dc]" /></button>
      <button aria-label="Wiedergabe" className="flex w-[18px] justify-center"><Tri dir="right" size={14} /></button>
      <button aria-label="Aufnahme" className="flex w-[26px] justify-center"><Dot size={14} /></button>
      <button aria-label="Loop" className="flex w-[30px] justify-center">
        <svg width="22" height="15" viewBox="0 0 22 15"><path d="M7 13.5H6Q1 13.5 1 9V6Q1 1 6 1H16Q21 1 21 6V9Q21 13.5 16 13.5H14Q12 13.5 12.6 11.5L14 7M7 13.5Q9.4 12.5 9.6 7" fill="none" stroke="currentColor" strokeWidth="1.3" /></svg>
      </button>
    </div>
    <div className="ml-2 grid w-[80px] grid-cols-[10px_1fr] content-center text-[9px] leading-[10px]">
      <span className="text-[#4a86b5]">L</span><span>00001.01.01.00</span>
      <span className="text-[#4a86b5]">R</span><span>00001.01.01.00</span>
    </div>
    <div className="ml-1 grid w-9 grid-cols-2 place-items-center content-center gap-y-1 text-[#b9bbbd]">
      <svg width="11" height="7" viewBox="0 0 11 7"><path d="M0 1H3Q5 6 7 5H11M0 5H2" stroke="currentColor" fill="none" /></svg>
      <svg width="10" height="7" viewBox="0 0 10 7"><path d="M0.5 0V7M3 0V7M4 3.5H10M6 1.5V5.5" stroke="currentColor" /></svg>
      <svg width="8" height="8" viewBox="0 0 8 8"><circle cx="4" cy="4" r="2.2" fill="none" stroke="currentColor" strokeWidth="1.3" /><path d="M4 0V1.4M4 6.6V8M0 4H1.4M6.6 4H8M1.2 1.2L2.1 2.1M5.9 5.9L6.8 6.8M6.8 1.2L5.9 2.1M2.1 5.9L1.2 6.8" stroke="currentColor" /></svg>
      <svg width="10" height="7" viewBox="0 0 10 7"><path d="M0 3.5H10M3 0.5V6.5M7 0.5V6.5" stroke="currentColor" strokeWidth="1.4" /></svg>
    </div>
    <div className="flex w-10 flex-col items-center justify-center gap-1 text-[7px] text-[#8c8e91]">
      <span className="flex w-full items-center justify-around text-[#a9abae]">
        <Dot size={6} />
        <Wrench size={8} fill="currentColor" className="-scale-x-100" />
        <Tri dir="up" size={7} />
      </span>
      <span>Metronom</span>
    </div>
    <Readout value="4 / 4" label="Taktart" className="ml-1 w-[34px] items-center" />
    <Readout value="120.00" label="Tempo" className="ml-0.5 w-[34px] items-center" />
    <div className="mr-6 ml-2 flex w-[66px] flex-col justify-center gap-1">
      <span className="flex h-1.5 w-[45px] flex-col justify-between"><i className="h-0.5 bg-[#303236]" /><i className="h-0.5 bg-[#303236]" /></span>
      <span className="flex items-center gap-1">
        <i className="h-1.5 w-[45px] border-l border-[#d0d1d3] bg-[#26282b]" />
        <svg width="11" height="7" viewBox="0 0 11 7"><circle cx="3.5" cy="3.5" r="3" fill="#5bc0e8" /><circle cx="7.3" cy="3.5" r="2.8" fill="none" stroke="#5bc0e8" strokeWidth="1.2" /></svg>
      </span>
    </div>
    <div className="flex flex-1 justify-end bg-[#5e636b] font-['Inter',sans-serif] text-[8px] text-white [clip-path:polygon(3%_0,100%_0,100%_100%,0_100%)]">
      <button className="w-[38px] border-l border-[#494d54]">Edit</button>
      <button className="w-[38px] border-l border-[#494d54] bg-[#3091d6]">Mix</button>
      <button className="w-[42px] border-l border-[#1f5f8f] bg-[#3091d6]">Browse</button>
    </div>
  </footer>
);

const App: React.FC = () => (
  <div className="flex min-h-screen flex-col bg-[#0d0e10] font-['Inter','Liberation_Sans',sans-serif] leading-[9px]">
    <TitleBar />
    <Toolbar />
    <main className="mt-0.5 flex flex-1">
      <div className="mr-[3px] ml-px flex min-w-0 flex-1 flex-col gap-[3px]">
        <Arranger />
        <Mixer />
      </div>
      <Browser />
    </main>
    <Transport />
  </div>
);

export default App;
